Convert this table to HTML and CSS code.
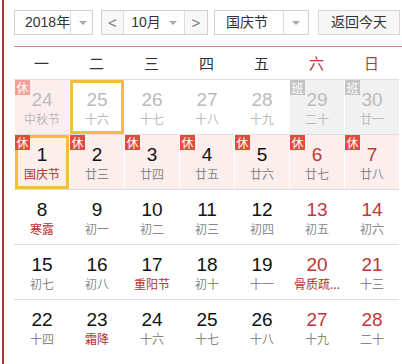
FILE: index.html
```html
<!DOCTYPE html>
<html lang="zh-CN">
<head>
<meta charset="utf-8">
<link rel="stylesheet" href="styles.css">
</head>
<body>
<div class="frame">
  <div class="toolbar">
    <div class="select year"><span class="val">2018年</span><span class="arrow"><i></i></span></div>
    <div class="monthnav">
      <span class="navbtn">&lt;</span>
      <div class="month"><span class="val">10月</span><i></i></div>
      <span class="navbtn right">&gt;</span>
    </div>
    <div class="select holiday"><span class="val">国庆节</span><span class="arrow"><i></i></span></div>
    <div class="today">返回今天</div>
  </div>
  <div class="rule"></div>
  <div class="weekdays">
    <span>一</span><span>二</span><span>三</span><span>四</span><span>五</span><span class="we">六</span><span class="we">日</span>
  </div>
  <div class="week">
    <div class="cell"><div class="in other rest"><b class="tag">休</b><div class="n">24</div><div class="l">中秋节</div></div></div>
    <div class="cell"><div class="in other sel"><div class="n">25</div><div class="l">十六</div></div></div>
    <div class="cell"><div class="in other"><div class="n">26</div><div class="l">十七</div></div></div>
    <div class="cell"><div class="in other"><div class="n">27</div><div class="l">十八</div></div></div>
    <div class="cell"><div class="in other"><div class="n">28</div><div class="l">十九</div></div></div>
    <div class="cell"><div class="in other work"><b class="tag">班</b><div class="n">29</div><div class="l">二十</div></div></div>
    <div class="cell"><div class="in other work"><b class="tag">班</b><div class="n">30</div><div class="l">廿一</div></div></div>
  </div>
  <div class="week">
    <div class="cell"><div class="in rest sel"><b class="tag">休</b><div class="n">1</div><div class="l fest">国庆节</div></div></div>
    <div class="cell"><div class="in rest"><b class="tag">休</b><div class="n">2</div><div class="l">廿三</div></div></div>
    <div class="cell"><div class="in rest"><b class="tag">休</b><div class="n">3</div><div class="l">廿四</div></div></div>
    <div class="cell"><div class="in rest"><b class="tag">休</b><div class="n">4</div><div class="l">廿五</div></div></div>
    <div class="cell"><div class="in rest"><b class="tag">休</b><div class="n">5</div><div class="l">廿六</div></div></div>
    <div class="cell"><div class="in rest wk"><b class="tag">休</b><div class="n">6</div><div class="l">廿七</div></div></div>
    <div class="cell"><div class="in rest wk"><b class="tag">休</b><div class="n">7</div><div class="l">廿八</div></div></div>
  </div>
  <div class="week">
    <div class="cell"><div class="in"><div class="n">8</div><div class="l fest">寒露</div></div></div>
    <div class="cell"><div class="in"><div class="n">9</div><div class="l">初一</div></div></div>
    <div class="cell"><div class="in"><div class="n">10</div><div class="l">初二</div></div></div>
    <div class="cell"><div class="in"><div class="n">11</div><div class="l">初三</div></div></div>
    <div class="cell"><div class="in"><div class="n">12</div><div class="l">初四</div></div></div>
    <div class="cell"><div class="in wk"><div class="n">13</div><div class="l">初五</div></div></div>
    <div class="cell"><div class="in wk"><div class="n">14</div><div class="l">初六</div></div></div>
  </div>
  <div class="week">
    <div class="cell"><div class="in"><div class="n">15</div><div class="l">初七</div></div></div>
    <div class="cell"><div class="in"><div class="n">16</div><div class="l">初八</div></div></div>
    <div class="cell"><div class="in"><div class="n">17</div><div class="l fest">重阳节</div></div></div>
    <div class="cell"><div class="in"><div class="n">18</div><div class="l">初十</div></div></div>
    <div class="cell"><div class="in"><div class="n">19</div><div class="l">十一</div></div></div>
    <div class="cell"><div class="in wk"><div class="n">20</div><div class="l fest">骨质疏...</div></div></div>
    <div class="cell"><div class="in wk"><div class="n">21</div><div class="l">十三</div></div></div>
  </div>
  <div class="week">
    <div class="cell"><div class="in"><div class="n">22</div><div class="l">十四</div></div></div>
    <div class="cell"><div class="in"><div class="n">23</div><div class="l fest">霜降</div></div></div>
    <div class="cell"><div class="in"><div class="n">24</div><div class="l">十六</div></div></div>
    <div class="cell"><div class="in"><div class="n">25</div><div class="l">十七</div></div></div>
    <div class="cell"><div class="in"><div class="n">26</div><div class="l">十八</div></div></div>
    <div class="cell"><div class="in wk"><div class="n">27</div><div class="l">十九</div></div></div>
    <div class="cell"><div class="in wk"><div class="n">28</div><div class="l">二十</div></div></div>
  </div>
</div>
</body>
</html>
```
FILE: styles.css
```css
html, body {
  margin: 0;
  padding: 0;
  background: #fff;
  overflow: hidden;
}
body {
  width: 402px;
  height: 364px;
  font-family: "Liberation Sans", "Noto Sans CJK SC", sans-serif;
  color: #333;
}
.frame {
  margin-left: 2px;
  border-left: 2px solid #a83a32;
  padding-left: 10px;
  height: 364px;
  box-sizing: border-box;
}
.toolbar {
  display: flex;
  align-items: center;
  padding-top: 10px;
  height: 25px;
}
.select {
  display: flex;
  height: 25px;
  box-sizing: border-box;
  border: 1px solid #d0d0d0;
  background: #fff;
  font-size: 14px;
  line-height: 23px;
  color: #333;
  white-space: nowrap;
}
.select .val {
  flex: 1;
  padding-left: 10px;
  white-space: nowrap;
}
.select .arrow {
  width: 23px;
  flex: none;
  border-left: 1px solid #ddd;
  display: flex;
  align-items: center;
  justify-content: center;
}
.select i, .month i {
  display: block;
  width: 0;
  height: 0;
  border-left: 4px solid transparent;
  border-right: 4px solid transparent;
  border-top: 4px solid #aaa;
}
.year { width: 79px; }
.year .val { padding-left: 10px; }
.monthnav {
  display: flex;
  margin-left: 8px;
  height: 25px;
  box-sizing: border-box;
  border: 1px solid #d0d0d0;
  font-size: 14px;
  line-height: 23px;
}
.navbtn {
  width: 21px;
  text-align: center;
  background: #f7f7f7;
  color: #777;
  font-size: 15px;
  border-right: 1px solid #ddd;
}
.navbtn.right {
  border-right: 0;
  border-left: 1px solid #ddd;
  width: 22px;
}
.month {
  width: 60px;
  display: flex;
  align-items: center;
  justify-content: center;
  gap: 8px;
  background: #fff;
  color: #333;
  white-space: nowrap;
}
.holiday {
  width: 95px;
  margin-left: 6px;
}
.holiday .val { padding-left: 11px; }
.holiday .arrow { width: 24px; }
.today {
  margin-left: 9px;
  width: 82px;
  height: 25px;
  box-sizing: border-box;
  border: 1px solid #d8d8d8;
  background: #f7f7f7;
  font-size: 14px;
  line-height: 23px;
  text-align: center;
  color: #333;
  white-space: nowrap;
}
.rule {
  margin-top: 11px;
  height: 1px;
  background: #cf8a86;
  margin-right: -10px;
}
.weekdays {
  display: grid;
  grid-template-columns: repeat(7, 55px);
  height: 32px;
  line-height: 32px;
  font-size: 15px;
  text-align: center;
  color: #333;
  font-family: "Noto Sans CJK SC", sans-serif;
}
.weekdays .we { color: #c0363a; }
.week {
  display: grid;
  grid-template-columns: repeat(7, 55px);
  border-top: 1px solid #dedede;
  width: 385px;
  height: 54px;
}
.cell {
  padding-left: 1px;
  height: 54px;
}
.in {
  position: relative;
  height: 54px;
  box-sizing: border-box;
  padding-top: 10px;
  text-align: center;
}
.n {
  font-size: 19px;
  line-height: 20px;
  color: #111;
}
.l {
  font-size: 12px;
  line-height: 16px;
  margin-top: 1px;
  color: #888;
  white-space: nowrap;
  font-family: "Noto Sans CJK SC", sans-serif;
}
.l.fest { color: #b8312c; }
.wk .n { color: #c0363a; }
.rest { background: #fdeeee; }
.work { background: #f1f1f1; }
.other .n { color: #bbb; }
.other .l { color: #bbb; }
.sel {
  border: 3px solid #f3bf3a;
  padding-top: 7px;
}
.tag {
  position: absolute;
  left: 0;
  top: 0;
  width: 15px;
  height: 15px;
  font-size: 12px;
  line-height: 15px;
  font-weight: normal;
  text-align: center;
  color: #fff;
  background: #e34a3c;
  font-family: "Noto Sans CJK SC", sans-serif;
}
.sel .tag { left: -3px; top: -3px; }
.other.rest .tag { background: #f0a09a; }
.work .tag { background: #bdbdbd; }
.other.work .tag { background: #c4c4c4; }
```
